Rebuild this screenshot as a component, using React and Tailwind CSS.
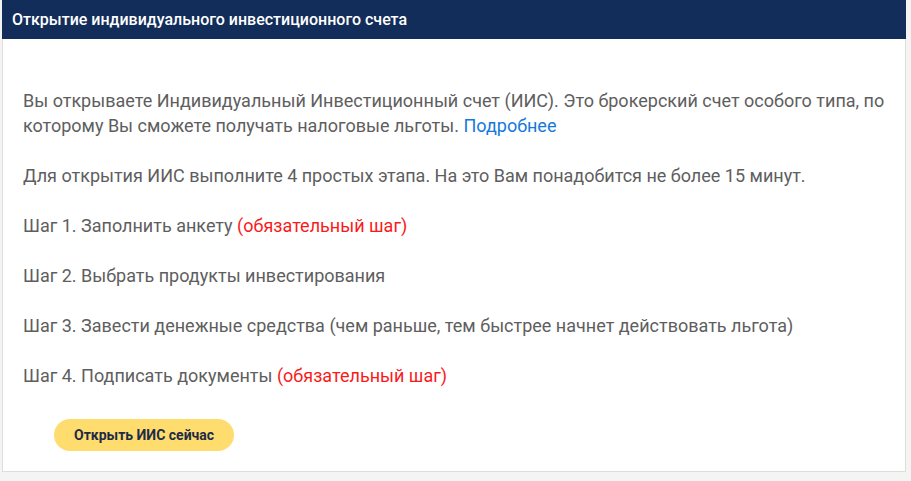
export default function App() {
  return (
    <div className="w-[911px] h-[481px] bg-[#f3f4f3] pl-[2px] pr-[5px] pb-[9px] font-['Roboto',sans-serif]">
      <div className="flex flex-col h-full bg-white border-x border-b border-[#dcdedc]">
        <div className="h-[39px] bg-[#132d5a] flex items-center px-[10px] -mx-px">
          <h1 className="text-[16px] font-medium text-white">Открытие индивидуального инвестиционного счета</h1>
        </div>
        <div className="pt-[49px] pl-[20px] pr-4 text-[18px] leading-[25px] text-[#5e5e5e]">
          <p className="mb-[25px]">
            Вы открываете Индивидуальный Инвестиционный счет (ИИС). Это брокерский счет особого типа, по которому Вы сможете получать налоговые льготы. <a href="#" className="text-[#1479dc]">Подробнее</a>
          </p>
          <p className="mb-[25px]">Для открытия ИИС выполните 4 простых этапа. На это Вам понадобится не более 15 минут.</p>
          <p className="mb-[25px]">Шаг 1. Заполнить анкету <span className="text-[#fa1a1a]">(обязательный шаг)</span></p>
          <p className="mb-[25px]">Шаг 2. Выбрать продукты инвестирования</p>
          <p className="mb-[25px]">Шаг 3. Завести денежные средства (чем раньше, тем быстрее начнет действовать льгота)</p>
          <p>Шаг 4. Подписать документы <span className="text-[#fa1a1a]">(обязательный шаг)</span></p>
          <button className="mt-[31px] ml-[31px] h-[32px] px-5 rounded-full bg-[#fedc6d] text-[14px] font-bold text-[#1d2b47]">Открыть ИИС сейчас</button>
        </div>
      </div>
    </div>
  )
}
